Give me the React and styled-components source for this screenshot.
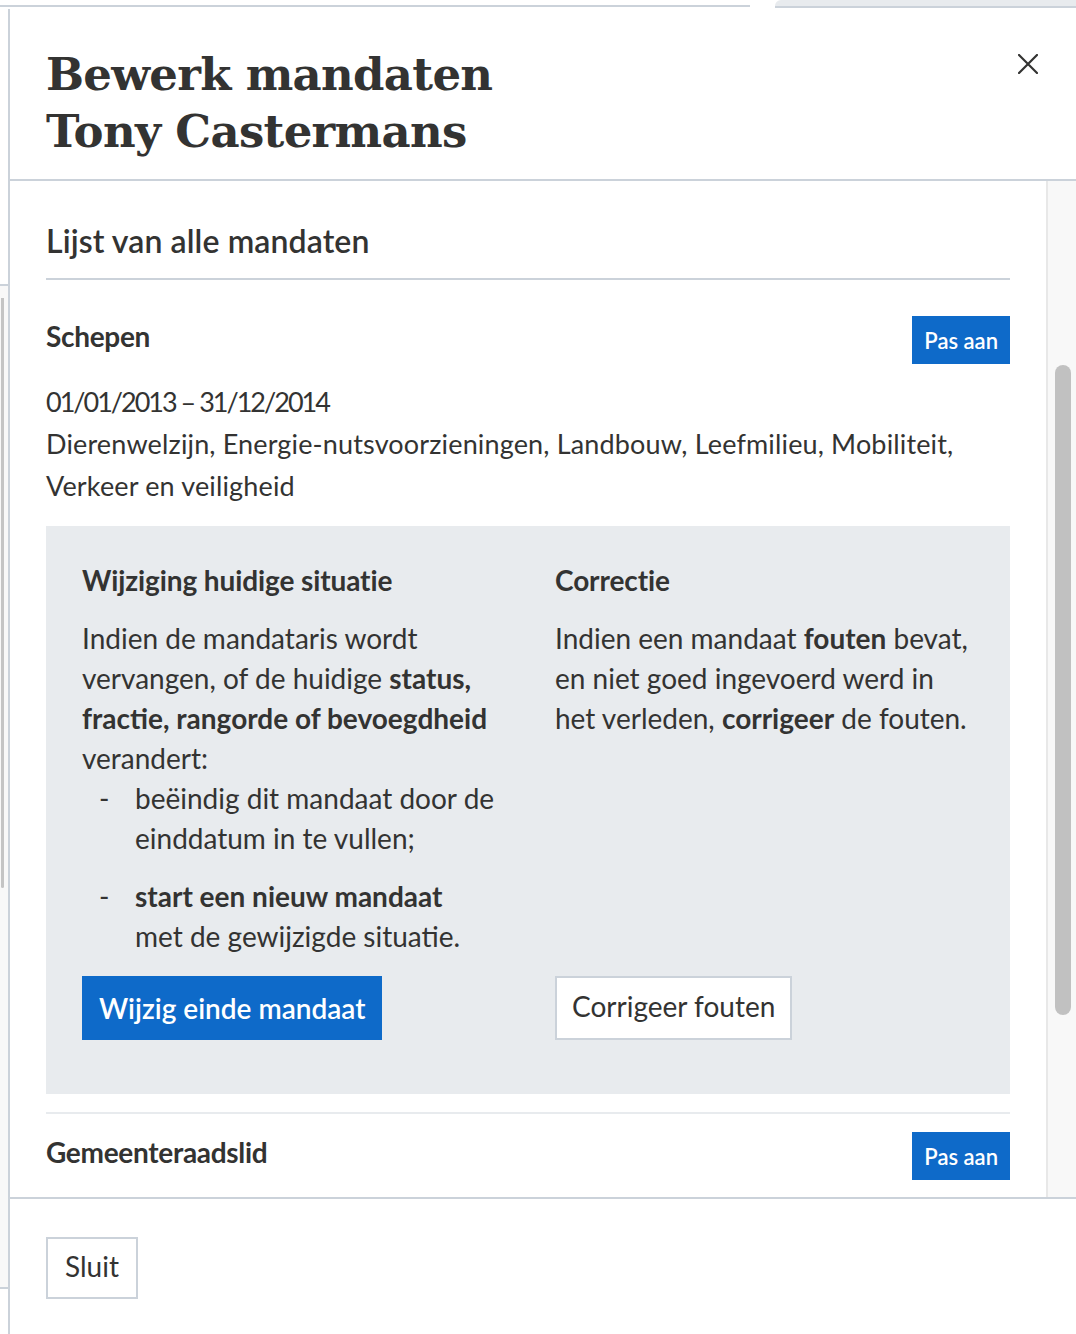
import React from "react";
import styled, { createGlobalStyle } from "styled-components";

const Global = createGlobalStyle`
  html, body { margin: 0; padding: 0; background: #ffffff; }
  body { font-family: "Lato", "Noto Sans", sans-serif; color: #333332; }
  * { box-sizing: border-box; }
`;

const Page = styled.div`
  width: 1076px;
  height: 1334px;
  position: relative;
  overflow: hidden;
  background: #ffffff;
`;

const PageTop = styled.div`
  display: flex;
  align-items: flex-end;
  height: 8px;
`;

const TopLine = styled.div`
  width: 750px;
  height: 2px;
  margin-bottom: 1px;
  background: #cbd2da;
`;

const TopTab = styled.div`
  margin-left: 25px;
  flex: 1;
  height: 8px;
  background: #e8ebee;
  border-bottom: 2px solid #cbd2da;
  border-top-left-radius: 6px;
`;

const BehindPanel = styled.div`
  margin-top: 276px;
  width: 8px;
  height: 1005px;
  border-top: 2px solid #cbd2da;
  border-bottom: 2px solid #cbd2da;
  background: #f8f8f8;
  padding: 12px 4px 0 1px;
`;

const BehindThumb = styled.div`
  height: 590px;
  background: #c4c4c4;
  border-radius: 0 0 2px 2px;
`;

const Modal = styled.div`
  position: absolute;
  top: 9px;
  left: 8px;
  width: 1068px;
  height: 1325px;
  background: #ffffff;
  border-left: 2px solid #cbd2da;
  display: flex;
  flex-direction: column;
`;

const Header = styled.header`
  height: 172px;
  flex: none;
  border-bottom: 2px solid #cbd2da;
  display: flex;
  justify-content: space-between;
  align-items: flex-start;
  padding: 37px 36px 0 36px;
`;

const Title = styled.h1`
  margin: 0;
  font-family: "DejaVu Serif", serif;
  font-weight: 700;
  font-size: 45px;
  line-height: 57px;
  letter-spacing: -0.7px;
  color: #333332;
`;

const CloseButton = styled.button`
  border: none;
  background: transparent;
  padding: 0;
  margin-top: 8px;
  margin-right: 2px;
  width: 20px;
  height: 20px;
  display: flex;
  cursor: pointer;
`;

const Body = styled.div`
  flex: 1;
  min-height: 0;
  display: flex;
  overflow: hidden;
  border-bottom: 2px solid #cbd2da;
`;

const Content = styled.div`
  flex: 1;
  padding: 42px 36px 0 36px;
`;

const Track = styled.div`
  width: 30px;
  flex: none;
  background: #f8f8f8;
  border-left: 2px solid #e8e8e8;
  padding: 184px 5px 0 7px;
`;

const Thumb = styled.div`
  height: 650px;
  width: 16px;
  border-radius: 8px;
  background: #c1c1c1;
`;

const SectionTitle = styled.h2`
  margin: 0;
  font-size: 32px;
  line-height: 36px;
  font-weight: 600;
  padding-bottom: 19px;
  border-bottom: 2px solid #cbd2da;
  letter-spacing: 0.1px;
`;

const MandateRow = styled.div`
  display: flex;
  justify-content: space-between;
  align-items: flex-start;
  margin-top: ${(p) => p.$top}px;
`;

const MandateName = styled.h3`
  margin: 0;
  font-size: 28px;
  line-height: 40px;
  font-weight: 700;
  letter-spacing: -0.3px;
`;

const SmallButton = styled.button`
  height: 48px;
  padding: 0 12px;
  border: none;
  background: #0e6ac9;
  color: #ffffff;
  font-family: "Lato", sans-serif;
  font-size: 22px;
  font-weight: 600;
  cursor: pointer;
`;

const Info = styled.p`
  margin: 17px 0 0 0;
  font-size: 27px;
  line-height: 42px;
  letter-spacing: 0.15px;
`;

const DateText = styled.span`
  letter-spacing: -2px;
`;

const ActionBox = styled.div`
  margin-top: 19px;
  background: #e8ebee;
  padding: 36px 36px 54px 36px;
  display: grid;
  grid-template-columns: 419px 419px;
  column-gap: 54px;
`;

const Column = styled.div`
  display: flex;
  flex-direction: column;
`;

const ColTitle = styled.h4`
  margin: 0;
  font-size: 28px;
  line-height: 36px;
  font-weight: 700;
  letter-spacing: -0.1px;
`;

const Para = styled.p`
  margin: 20px 0 0 0;
  font-size: 28px;
  line-height: 40px;
  b { font-weight: 700; }
`;

const DashList = styled.ul`
  margin: 0;
  padding: 0;
  list-style: none;
  display: flex;
  flex-direction: column;
  gap: 18px;
`;

const DashItem = styled.li`
  position: relative;
  padding-left: 53px;
  font-size: 28px;
  line-height: 40px;
  b { font-weight: 700; }
  &::before {
    content: "-";
    position: absolute;
    left: 17px;
    top: 0;
  }
`;

const PrimaryButton = styled.button`
  margin-top: auto;
  align-self: flex-start;
  height: 64px;
  padding: 0 17px;
  border: none;
  background: #0e6ac9;
  color: #ffffff;
  font-family: "Lato", sans-serif;
  font-size: 28px;
  font-weight: 600;
  cursor: pointer;
`;

const SecondaryButton = styled.button`
  margin-top: ${(p) => (p.$auto ? "auto" : "0")};
  align-self: flex-start;
  height: ${(p) => p.$h}px;
  padding: 0 ${(p) => p.$px}px;
  border: 2px solid #cbd2da;
  background: #ffffff;
  color: #333332;
  font-family: "Lato", sans-serif;
  font-size: 28px;
  font-weight: 400;
  line-height: 1;
  padding-bottom: 4px;
  cursor: pointer;
`;

const ButtonSpacer = styled.div`
  height: 20px;
  flex: none;
`;

const Divider = styled.hr`
  margin: 18px 0 0 0;
  border: none;
  height: 2px;
  background: #e8ebee;
`;

const Footer = styled.footer`
  height: 135px;
  flex: none;
  padding: 38px 36px 0 36px;
`;

function CloseIcon() {
  return (
    <svg width="20" height="20" viewBox="0 0 20 20">
      <path d="M1 1 L19 19 M19 1 L1 19" stroke="#333332" strokeWidth="2.2" strokeLinecap="square" />
    </svg>
  );
}

export default function App() {
  return (
    <>
      <Global />
      <Page>
        <PageTop>
          <TopLine />
          <TopTab />
        </PageTop>
        <BehindPanel>
          <BehindThumb />
        </BehindPanel>
        <Modal>
          <Header>
            <Title>
              Bewerk mandaten
              <br />
              Tony Castermans
            </Title>
            <CloseButton aria-label="Sluit">
              <CloseIcon />
            </CloseButton>
          </Header>
          <Body>
            <Content>
              <SectionTitle>Lijst van alle mandaten</SectionTitle>
              <MandateRow $top={36}>
                <MandateName>Schepen</MandateName>
                <SmallButton>Pas aan</SmallButton>
              </MandateRow>
              <Info>
                <DateText>01/01/2013 – 31/12/2014</DateText>
                <br />
                Dierenwelzijn, Energie-nutsvoorzieningen, Landbouw, Leefmilieu, Mobiliteit,
                <br />
                Verkeer en veiligheid
              </Info>
              <ActionBox>
                <Column>
                  <ColTitle>Wijziging huidige situatie</ColTitle>
                  <Para>
                    Indien de mandataris wordt vervangen, of de huidige <b>status, fractie, rangorde of bevoegdheid</b> verandert:
                  </Para>
                  <DashList>
                    <DashItem>beëindig dit mandaat door de einddatum in te vullen;</DashItem>
                    <DashItem>
                      <b>start een nieuw mandaat</b>
                      <br />
                      met de gewijzigde situatie.
                    </DashItem>
                  </DashList>
                  <ButtonSpacer />
                  <PrimaryButton>Wijzig einde mandaat</PrimaryButton>
                </Column>
                <Column>
                  <ColTitle>Correctie</ColTitle>
                  <Para>
                    Indien een mandaat <b>fouten</b> bevat, en niet goed ingevoerd werd in het verleden, <b>corrigeer</b> de fouten.
                  </Para>
                  <ButtonSpacer />
                  <SecondaryButton $auto $h={64} $px={15}>Corrigeer fouten</SecondaryButton>
                </Column>
              </ActionBox>
              <Divider />
              <MandateRow $top={18}>
                <MandateName>Gemeenteraadslid</MandateName>
                <SmallButton>Pas aan</SmallButton>
              </MandateRow>
            </Content>
            <Track>
              <Thumb />
            </Track>
          </Body>
          <Footer>
            <SecondaryButton $h={62} $px={17}>Sluit</SecondaryButton>
          </Footer>
        </Modal>
      </Page>
    </>
  );
}
